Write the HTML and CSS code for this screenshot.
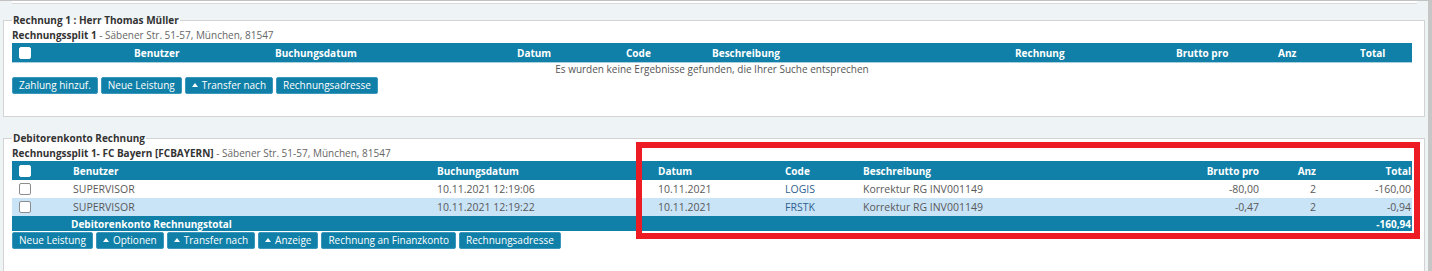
FILE: index.html
```html
<!DOCTYPE html>
<html lang="de">
<head>
    <meta charset="UTF-8">
    <meta name="viewport" content="width=device-width, initial-scale=1.0">
    <link rel="stylesheet" href="styles.css">
</head>
<body>
    <div class="page">
        <div class="topbar"></div>

        <fieldset class="invoice">
            <legend>Rechnung 1 : Herr Thomas Müller</legend>
            <div class="split-title"><b>Rechnungssplit 1</b> - Säbener Str. 51-57, München, 81547</div>
            <table class="grid grid-empty">
                <colgroup>
                    <col style="width:118px"><col style="width:141px"><col style="width:242px"><col style="width:109px"><col style="width:86px">
                    <col style="width:303px"><col style="width:161px"><col style="width:102px"><col style="width:82px"><col style="width:56px">
                </colgroup>
                <thead>
                    <tr>
                        <th class="check"><input type="checkbox"></th>
                        <th>Benutzer</th>
                        <th>Buchungsdatum</th>
                        <th>Datum</th>
                        <th>Code</th>
                        <th>Beschreibung</th>
                        <th>Rechnung</th>
                        <th>Brutto pro</th>
                        <th>Anz</th>
                        <th>Total</th>
                    </tr>
                </thead>
                <tbody>
                    <tr>
                        <td class="no-results" colspan="10">Es wurden keine Ergebnisse gefunden, die Ihrer Suche entsprechen</td>
                    </tr>
                </tbody>
            </table>
            <div class="toolbar">
                <button>Zahlung hinzuf.</button>
                <button>Neue Leistung</button>
                <button><span class="caret"></span>Transfer nach</button>
                <button>Rechnungsadresse</button>
            </div>
        </fieldset>

        <fieldset class="invoice invoice-last">
            <legend>Debitorenkonto Rechnung</legend>
            <div class="split-title"><b>Rechnungssplit 1- FC Bayern [FCBAYERN]</b> - Säbener Str. 51-57, München, 81547</div>
            <table class="grid">
                <colgroup>
                    <col style="width:57px"><col style="width:364px"><col style="width:221px"><col style="width:127px"><col style="width:78px">
                    <col style="width:321px"><col style="width:83px"><col style="width:57px"><col style="width:92px">
                </colgroup>
                <thead>
                    <tr>
                        <th class="check"><input type="checkbox"></th>
                        <th>Benutzer</th>
                        <th>Buchungsdatum</th>
                        <th>Datum</th>
                        <th>Code</th>
                        <th>Beschreibung</th>
                        <th class="num">Brutto pro</th>
                        <th class="num">Anz</th>
                        <th class="num last">Total</th>
                    </tr>
                </thead>
                <tbody>
                    <tr>
                        <td class="check"><input type="checkbox"></td>
                        <td>SUPERVISOR</td>
                        <td>10.11.2021 12:19:06</td>
                        <td>10.11.2021</td>
                        <td class="code">LOGIS</td>
                        <td>Korrektur RG INV001149</td>
                        <td class="num">-80,00</td>
                        <td class="num">2</td>
                        <td class="num last">-160,00</td>
                    </tr>
                    <tr class="selected">
                        <td class="check"><input type="checkbox"></td>
                        <td>SUPERVISOR</td>
                        <td>10.11.2021 12:19:22</td>
                        <td>10.11.2021</td>
                        <td class="code">FRSTK</td>
                        <td>Korrektur RG INV001149</td>
                        <td class="num">-0,47</td>
                        <td class="num">2</td>
                        <td class="num last">-0,94</td>
                    </tr>
                    <tr class="total">
                        <td></td>
                        <td colspan="7">Debitorenkonto Rechnungstotal</td>
                        <td class="num last">-160,94</td>
                    </tr>
                </tbody>
            </table>
            <div class="toolbar">
                <button>Neue Leistung</button>
                <button><span class="caret"></span>Optionen</button>
                <button><span class="caret"></span>Transfer nach</button>
                <button><span class="caret"></span>Anzeige</button>
                <button>Rechnung an Finanzkonto</button>
                <button>Rechnungsadresse</button>
            </div>
        </fieldset>
    </div>

    <div class="highlight"></div>
</body>
</html>
```

FILE: styles.css
```css
body {
    margin: 0;
    background-color: #eef3f6;
    font-family: "Open Sans", Arial, sans-serif;
    font-size: 10px;
    color: #333;
}

.page {
    height: 270px;
    overflow: hidden;
    border-top: 1px solid #c2c2c2;
    border-right: 4px solid #c6c6c6;
}

.topbar {
    height: 2px;
    margin: 0 11px 0 12px;
    background-color: white;
    border-bottom: 1px solid #d9d9d9;
}

.invoice {
    margin: 8px 3px 0 3px;
    padding: 0 12px 22px 8px;
    background-color: white;
    border: 1px solid #d3d3d3;
}

.invoice-last {
    margin-top: 13px;
    padding-bottom: 30px;
}

.invoice legend {
    padding: 0 1px;
    line-height: 16px;
    font-weight: bold;
    color: #333;
}

.split-title {
    height: 15px;
    line-height: 15px;
    color: #666;
}

.split-title b {
    color: #333;
}

.grid {
    width: 1400px;
    border-collapse: collapse;
    table-layout: fixed;
}

.grid th {
    height: 19px;
    padding: 0 4px;
    background-color: #1080a8;
    color: white;
    text-align: left;
    font-weight: bold;
    line-height: 14px;
    white-space: nowrap;
}

.grid-empty thead tr {
    border-bottom: 1px solid #a9cfdf;
}

.grid td {
    height: 18px;
    padding: 0 4px;
    line-height: 14px;
    font-size: 10.5px;
    color: #595959;
    white-space: nowrap;
}

.grid .check {
    padding-left: 7px;
}

.grid .num {
    text-align: right;
}

.grid .last {
    padding-right: 1px;
}

.grid td.code {
    color: #2f5f8f;
}

.grid td.no-results {
    height: 13px;
    line-height: 13px;
    font-size: 10px;
    text-align: center;
    color: #555;
}

.grid tr.selected td {
    background-color: #c9e3f7;
}

.grid tr.total td {
    height: 15px;
    background-color: #1080a8;
    color: white;
    font-weight: bold;
    font-size: 10px;
    padding-left: 2px;
}

.grid tr.total td.last {
    padding-right: 1px;
}

.grid input[type="checkbox"] {
    appearance: none;
    display: block;
    width: 12px;
    height: 12px;
    margin: 0;
    background-color: white;
    border: 1px solid #8d8d8d;
    border-radius: 2px;
}

.grid th input[type="checkbox"] {
    border-color: white;
}

.toolbar {
    display: flex;
    gap: 3px;
    margin-top: 1px;
}

.toolbar button {
    height: 17px;
    padding: 0 6px;
    background-color: #1080a8;
    border: 1px solid #3b98bc;
    border-radius: 2px;
    color: white;
    font-family: inherit;
    font-size: 10px;
    line-height: 15px;
}

.caret {
    display: inline-block;
    margin: 0 4px 2px 0;
    border-left: 3px solid transparent;
    border-right: 3px solid transparent;
    border-bottom: 4px solid white;
    vertical-align: middle;
}

.highlight {
    position: absolute;
    left: 636px;
    top: 142px;
    width: 772px;
    height: 85px;
    border: 6px solid #ed1c24;
}
```
